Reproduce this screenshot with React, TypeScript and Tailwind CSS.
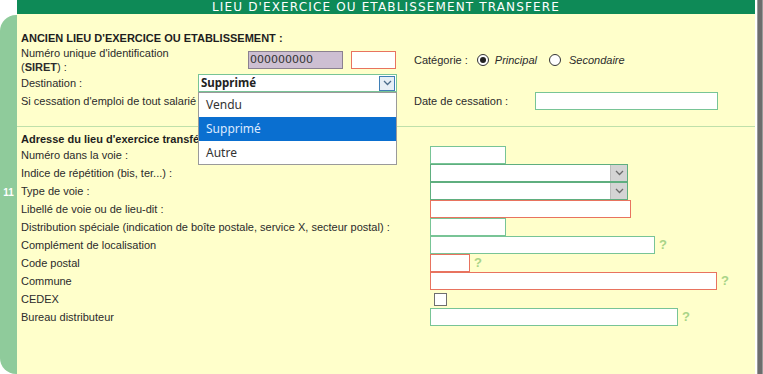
import React from 'react';

const label = "text-[11px] leading-[14px] text-[#2b2b2b]";

function Chevron({ color = '#6b6b6b' }: { color?: string }) {
  return (
    <svg width="9" height="6" viewBox="0 0 9 6">
      <path d="M1 1l3.5 3.5L8 1" fill="none" stroke={color} strokeWidth="1.3" />
    </svg>
  );
}

function Help() {
  return <span className="ml-[4px] text-[13px] font-bold leading-[14px] text-[#a8d487]">?</span>;
}

function Field({ w, red, help }: { w: string; red?: boolean; help?: boolean }) {
  return (
    <div className="flex items-center">
      <div className={`${w} h-[18px] bg-white border ${red ? 'border-[#e8735f]' : 'border-[#78c496]'}`} />
      {help && <Help />}
    </div>
  );
}

function Select({ w }: { w: string }) {
  return (
    <div className={`${w} h-[18px] bg-white border border-[#5fae7f] flex justify-end`}>
      <div className="w-[17px] h-full bg-[#d4d4d4] border-l border-[#bdbdbd] flex items-center justify-center">
        <Chevron />
      </div>
    </div>
  );
}

function Radio({ on }: { on?: boolean }) {
  return (
    <span className="w-[12px] h-[12px] rounded-full border border-[#333] bg-white flex items-center justify-center">
      {on && <span className="w-[6px] h-[6px] rounded-full bg-[#222]" />}
    </span>
  );
}

const addressRows: { text: string; input: React.ReactNode }[] = [
  { text: 'Numéro dans la voie :', input: <Field w="w-[76px]" /> },
  { text: 'Indice de répétition (bis, ter...) :', input: <Select w="w-[198px]" /> },
  { text: 'Type de voie :', input: <Select w="w-[198px]" /> },
  { text: 'Libellé de voie ou de lieu-dit :', input: <Field w="w-[201px]" red /> },
  { text: 'Distribution spéciale (indication de boîte postale, service X, secteur postal) :', input: <Field w="w-[76px]" /> },
  { text: 'Complément de localisation', input: <Field w="w-[225px]" help /> },
  { text: 'Code postal', input: <Field w="w-[40px]" red help /> },
  { text: 'Commune', input: <Field w="w-[287px]" red help /> },
  {
    text: 'CEDEX',
    input: <div className="ml-[4px] w-[13px] h-[13px] bg-white border border-[#6f6f6f]" />,
  },
  { text: 'Bureau distributeur', input: <Field w="w-[248px]" help /> },
];

export default function App() {
  return (
    <div className="w-[763px] h-[374px] bg-white flex overflow-hidden font-['Liberation_Sans',Arial,sans-serif]">
      <div className="w-[755px] flex flex-col">
        <div className="ml-[17px] h-[14px] bg-[#0e8a57] flex items-center justify-center">
          <span className="text-white text-[12px] leading-[14px] tracking-[1.15px] font-['DejaVu_Sans',sans-serif]">
            LIEU D'EXERCICE OU ETABLISSEMENT TRANSFERE
          </span>
        </div>
        <div className="flex-1 flex">
          <div className="w-[17px] mt-[1px] bg-[#8fcb9b] rounded-l-[16px] flex items-center justify-center">
            <span className="text-white text-[10px] font-bold -mt-[4px]">11</span>
          </div>
          <div className="flex-1 bg-[#ffffcb] relative">
            <div className="pl-[4px] pt-[17px]">
              <div className="h-[14px] text-[11px] leading-[14px] font-bold text-[#1e1e1e]">
                ANCIEN LIEU D'EXERCICE OU ETABLISSEMENT :
              </div>
              <div className="h-[29px] flex items-center">
                <div className={`w-[227px] ${label}`}>
                  Numéro unique d'identification
                  <br />(<b>SIRET</b>) :
                </div>
                <div className="w-[95px] h-[18px] bg-[#cdbfd2] border border-[#8b8190] text-[11px] leading-[16px] pl-[1px] text-[#333] font-['DejaVu_Sans',sans-serif]">
                  000000000
                </div>
                <div className="ml-[8px] w-[45px] h-[18px] bg-white border border-[#e8735f]" />
                <span className={`ml-[18px] ${label}`}>Catégorie :</span>
                <span className="ml-[9px]"><Radio on /></span>
                <span className={`ml-[6px] italic ${label}`}>Principal</span>
                <span className="ml-[12px]"><Radio /></span>
                <span className={`ml-[8px] italic ${label}`}>Secondaire</span>
              </div>
              <div className="h-[18px] flex items-center">
                <div className={`w-[177px] ${label}`}>Destination :</div>
                <div className="w-[199px] h-[18px] bg-white border border-[#78c496] flex items-center justify-between">
                  <span className="pl-[2px] text-[11.5px] font-bold text-[#222] font-['Noto_Sans',sans-serif] leading-[16px]">
                    Supprimé
                  </span>
                  <span className="mr-[1px] w-[16px] h-[15px] border border-[#3f7fb6] bg-[#e6eef6] flex items-center justify-center">
                    <Chevron color="#4a6c8c" />
                  </span>
                </div>
              </div>
              <div className="h-[18px] flex items-center">
                <div className={`w-[393px] ${label}`}>Si cessation d'emploi de tout salarié :</div>
                <div className={`w-[121px] ${label}`}>Date de cessation :</div>
                <div className="w-[183px] h-[18px] bg-white border border-[#78c496]" />
              </div>
            </div>
            <div className="mt-[16px] h-[1px] bg-[#bfe0aa]" />
            <div className="pl-[4px] pt-[5px]">
              <div className="h-[14px] text-[11px] leading-[14px] font-bold text-[#1e1e1e]">
                Adresse du lieu d'exercice transféré
              </div>
              {addressRows.map((r) => (
                <div key={r.text} className="h-[18px] flex items-center">
                  <div className={`w-[409px] ${label}`}>{r.text}</div>
                  {r.input}
                </div>
              ))}
            </div>
            <div className="absolute left-[181px] top-[78px] w-[199px] bg-white border border-[#9a9a9a] font-['Noto_Sans',sans-serif] text-[12px] text-[#333]">
              <div className="h-[24px] flex items-center pl-[7px]">Vendu</div>
              <div className="h-[24px] flex items-center pl-[7px] bg-[#0a6fd0] text-[#dce9ff]">Supprimé</div>
              <div className="h-[23px] flex items-center pl-[7px]">Autre</div>
            </div>
          </div>
        </div>
      </div>
      <div className="w-[2px] bg-white" />
      <div className="w-[6px] bg-[#6d6d6d] border-x border-[#9a9a9a]" />
    </div>
  );
}
